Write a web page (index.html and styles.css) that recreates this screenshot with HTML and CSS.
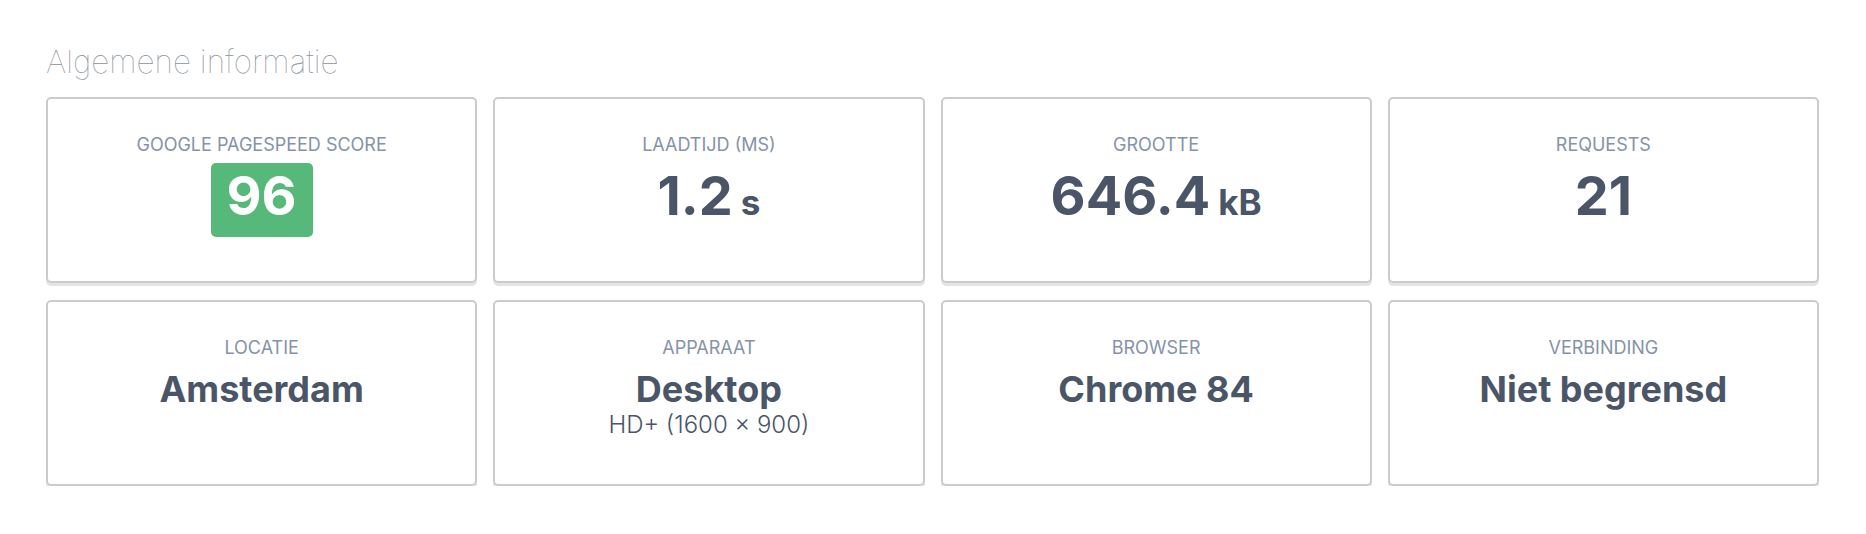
FILE: index.html
```html
<!DOCTYPE html>
<html lang="nl">
<head>
<meta charset="utf-8">
<title>Algemene informatie</title>
<link rel="stylesheet" href="styles.css">
</head>
<body>
<div class="page">
  <h2 class="title">Algemene informatie</h2>
  <div class="grid">
    <div class="card">
      <div class="label">Google Pagespeed score</div>
      <div class="score">96</div>
    </div>
    <div class="card">
      <div class="label">Laadtijd (ms)</div>
      <div class="value">1.2<span class="unit">s</span></div>
    </div>
    <div class="card">
      <div class="label">Grootte</div>
      <div class="value">646.4<span class="unit">kB</span></div>
    </div>
    <div class="card">
      <div class="label">Requests</div>
      <div class="value">21</div>
    </div>
    <div class="card">
      <div class="label">Locatie</div>
      <div class="value-sm">Amsterdam</div>
    </div>
    <div class="card">
      <div class="label">Apparaat</div>
      <div class="value-sm">Desktop</div>
      <div class="sub">HD+ (1600 × 900)</div>
    </div>
    <div class="card">
      <div class="label">Browser</div>
      <div class="value-sm">Chrome 84</div>
    </div>
    <div class="card">
      <div class="label">Verbinding</div>
      <div class="value-sm">Niet begrensd</div>
    </div>
  </div>
</div>
</body>
</html>
```

FILE: styles.css
```css
* { box-sizing: border-box; }
html, body {
  margin: 0;
  background: #ffffff;
  font-family: Inter, "Noto Sans", sans-serif;
}
.page {
  padding: 38px 47px 0 46px;
}
.title {
  margin: 0 0 11px 0;
  font-size: 31.5px;
  font-weight: 100;
  color: #8d939b;
  line-height: 48px;
}
.grid {
  display: grid;
  grid-template-columns: repeat(4, 1fr);
  gap: 17px 16px;
}
.card {
  height: 186px;
  border: 2px solid #cbcbcb;
  border-radius: 5px;
  box-shadow: 0 3px 0 #e4e4e4;
  padding-top: 32px;
  display: flex;
  flex-direction: column;
  align-items: center;
  color: #4a5568;
}
.label {
  font-size: 18px;
  line-height: 27px;
  text-transform: uppercase;
  color: #8593a8;
}
.value {
  margin-top: 10px;
  font-size: 54px;
  font-weight: 700;
  line-height: 56px;
}
.unit {
  font-size: 35px;
  margin-left: 8px;
}
.score {
  margin-top: 5px;
  background: #56b979;
  color: #ffffff;
  border-radius: 5px;
  font-size: 54px;
  font-weight: 700;
  line-height: 56px;
  padding: 5px 16px 13px;
}
.value-sm {
  margin-top: 7px;
  font-size: 36px;
  font-weight: 700;
  line-height: 43px;
}
.sub {
  margin-top: 2px;
  font-size: 24px;
  font-weight: 300;
  line-height: 24px;
}
```
